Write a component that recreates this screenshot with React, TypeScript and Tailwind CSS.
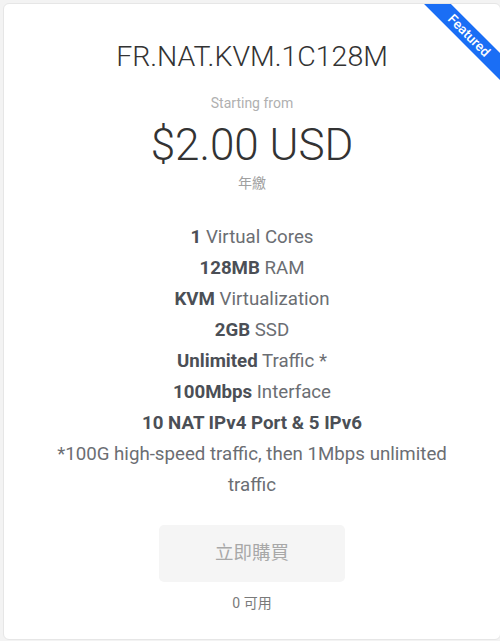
const features: [string, string][] = [
  ["1", " Virtual Cores"],
  ["128MB", " RAM"],
  ["KVM", " Virtualization"],
  ["2GB", " SSD"],
  ["Unlimited", " Traffic *"],
  ["100Mbps", " Interface"],
  ["10 NAT IPv4 Port & 5 IPv6", ""],
];

export default function App() {
  return (
    <div
      className="h-[641px] w-[500px] overflow-hidden bg-[#f3f3f3] pl-[3px] pt-[3px]"
      style={{ fontFamily: 'Roboto, "Noto Sans CJK TC", sans-serif' }}
    >
      <div className="relative h-[637px] w-[498px] overflow-hidden rounded-[6px] border border-[#e6e6e6] bg-white text-center">
        {/* featured ribbon */}
        <div className="absolute right-0 top-0 h-[80px] w-[80px] overflow-hidden">
          <div className="absolute left-[-11px] top-[22px] h-[19px] w-[120px] rotate-45 bg-[#1a6ef5] text-[13.5px] font-medium leading-[19px] text-white">
            Featured
          </div>
        </div>

        <div className="pt-[37px] text-[28.5px] font-light leading-[32px] text-[#333]">
          FR.NAT.KVM.1C128M
        </div>
        <div className="mt-[21px] text-[14px] leading-[18px] text-[#b0b0b0]">
          Starting from
        </div>
        <div className="mt-[9px] text-[44px] font-light leading-[48px] text-[#333]">
          $2.00 USD
        </div>
        <div className="mt-[5px] text-[14px] leading-[18px] text-[#a0a0a0]">
          年繳
        </div>

        <ul className="mt-[30px] px-[30px] text-[18.7px] leading-[31px] text-[#6b6e73]">
          {features.map(([b, rest]) => (
            <li key={b}>
              <span className="font-bold text-[#4b4f56]">{b}</span>
              {rest}
            </li>
          ))}
          <li>*100G high-speed traffic, then 1Mbps unlimited traffic</li>
        </ul>

        <button className="mt-[24px] h-[57px] w-[186px] rounded-[5px] bg-[#f5f5f5] text-[18.5px] text-[#a8a8a8]">
          立即購買
        </button>
        <div className="mt-[12px] text-[14px] leading-[18px] text-[#7a7a7a]">
          0 可用
        </div>
      </div>
    </div>
  );
}
